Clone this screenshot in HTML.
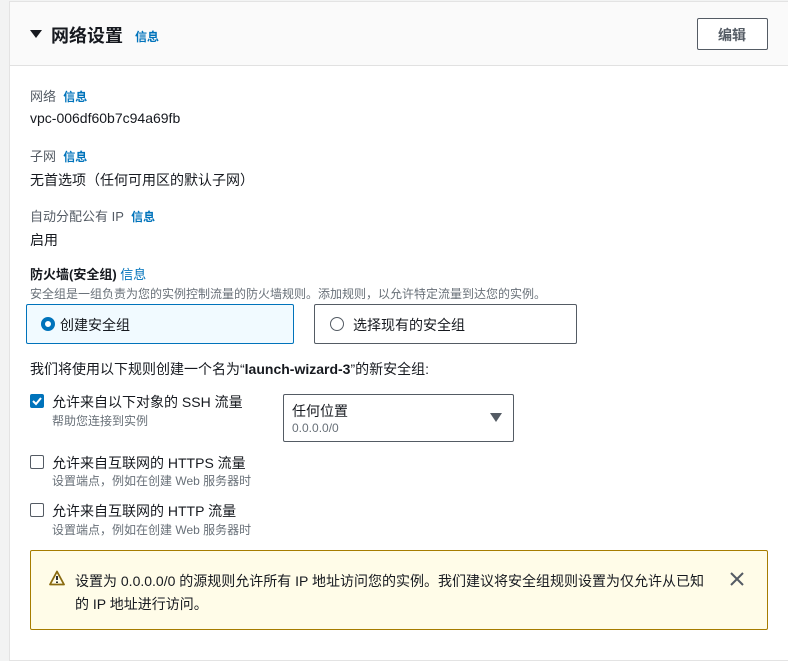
<!DOCTYPE html>
<html><head><meta charset="utf-8"><style>
*{margin:0;padding:0;box-sizing:border-box}
body{width:788px;height:649px;overflow:hidden;background:#f2f3f3;font-family:"Liberation Sans","Noto Sans CJK SC",sans-serif;color:#16191f;font-size:14px;position:relative}
.card{position:absolute;left:9px;top:1px;width:790px;height:660px;background:#fff;border:1px solid #e3e3e3}
.hdr{position:absolute;left:0;top:0;right:0;height:64px;background:#fafafa;border-bottom:1px solid #e1e1e1}
.a{position:absolute;white-space:nowrap}
.info{color:#0073bb;font-weight:bold;font-size:12px}
.lbl{color:#545b64;font-size:13px}
.sub{color:#687078;font-size:12px}
.box{position:absolute;border:1px solid #545b64;border-radius:2px}
.cb{position:absolute;width:14px;height:14px;border:1px solid #545b64;border-radius:2px;background:#fff}
</style></head><body>
<div class="card">
<div class="hdr">
<div class="a" style="left:20px;top:28px;width:0;height:0;border-left:6px solid transparent;border-right:6px solid transparent;border-top:8px solid #16191f"></div>
<div class="a" style="left:41px;top:20px;font-size:18px;font-weight:bold">网络设置</div>
<div class="a info" style="left:125px;top:26px">信息</div>
<div class="box" style="left:687px;top:16px;width:71px;height:32px;border-width:1px;background:#fff"></div>
<div class="a" style="left:708px;top:23px;font-weight:bold;color:#545b64;font-size:14px">编辑</div>
</div>
</div>
<div class="a lbl" style="left:30px;top:86px">网络&nbsp; <span class="info">信息</span></div>
<div class="a" style="left:30px;top:110px">vpc-006df60b7c94a69fb</div>
<div class="a lbl" style="left:30px;top:146px">子网&nbsp; <span class="info">信息</span></div>
<div class="a" style="left:30px;top:170px">无首选项（任何可用区的默认子网）</div>
<div class="a lbl" style="left:30px;top:206px">自动分配公有 IP&nbsp; <span class="info">信息</span></div>
<div class="a" style="left:30px;top:230px">启用</div>
<div class="a" style="left:30px;top:264px;font-weight:bold;font-size:13px">防火墙(安全组) <span class="info" style="font-weight:normal;font-size:13px">信息</span></div>
<div class="a sub" style="left:30px;top:285px">安全组是一组负责为您的实例控制流量的防火墙规则。添加规则，以允许特定流量到达您的实例。</div>
<div class="box" style="left:26px;top:304px;width:268px;height:40px;border-color:#0073bb;background:#f1faff"></div>
<div class="a" style="left:41px;top:317px;width:14px;height:14px;border-radius:50%;border:4px solid #0073bb;background:#fff"></div>
<div class="a" style="left:60px;top:315px">创建安全组</div>
<div class="box" style="left:314px;top:304px;width:263px;height:40px;border-color:#545b64"></div>
<div class="a" style="left:330px;top:317px;width:14px;height:14px;border-radius:50%;border:1px solid #545b64"></div>
<div class="a" style="left:353px;top:315px">选择现有的安全组</div>
<div class="a" style="left:30px;top:359px">我们将使用以下规则创建一个名为“<b>launch-wizard-3</b>”的新安全组:</div>
<div class="cb" style="left:30px;top:394px;background:#0073bb;border-color:#0073bb"><svg width="12" height="12" viewBox="0 0 12 12" style="position:absolute;left:0;top:0"><path d="M2 6l3 3 5-6" stroke="#fff" stroke-width="2" fill="none"/></svg></div>
<div class="a" style="left:52px;top:392px">允许来自以下对象的 SSH 流量</div>
<div class="a sub" style="left:52px;top:412px">帮助您连接到实例</div>
<div class="box" style="left:283px;top:394px;width:231px;height:48px;background:#fff"></div>
<div class="a" style="left:292px;top:401px">任何位置</div>
<div class="a sub" style="left:292px;top:421px">0.0.0.0/0</div>
<div class="a" style="left:490px;top:413px;width:0;height:0;border-left:6px solid transparent;border-right:6px solid transparent;border-top:9px solid #545b64"></div>
<div class="cb" style="left:30px;top:455px"></div>
<div class="a" style="left:52px;top:453px">允许来自互联网的 HTTPS 流量</div>
<div class="a sub" style="left:52px;top:472px">设置端点，例如在创建 Web 服务器时</div>
<div class="cb" style="left:30px;top:503px"></div>
<div class="a" style="left:52px;top:501px">允许来自互联网的 HTTP 流量</div>
<div class="a sub" style="left:52px;top:521px">设置端点，例如在创建 Web 服务器时</div>
<div class="a" style="left:30px;top:550px;width:738px;height:80px;background:#fffce8;border:1px solid #a67c00;border-radius:2px"></div>
<svg class="a" style="left:49px;top:570px" width="16" height="16" viewBox="0 0 16 16"><path d="M8 1.5L15 14.5H1Z" fill="none" stroke="#8a6b10" stroke-width="1.8" stroke-linejoin="round"/><path d="M8 6v4M8 11.5v1.5" stroke="#16191f" stroke-width="1.8"/></svg>
<div class="a" style="left:75px;top:570px;line-height:23px">设置为 0.0.0.0/0 的源规则允许所有 IP 地址访问您的实例。我们建议将安全组规则设置为仅允许从已知<br>的 IP 地址进行访问。</div>
<svg class="a" style="left:730px;top:572px" width="14" height="14" viewBox="0 0 14 14"><path d="M1 1l12 12M13 1L1 13" stroke="#545b64" stroke-width="2"/></svg>
</body></html>
